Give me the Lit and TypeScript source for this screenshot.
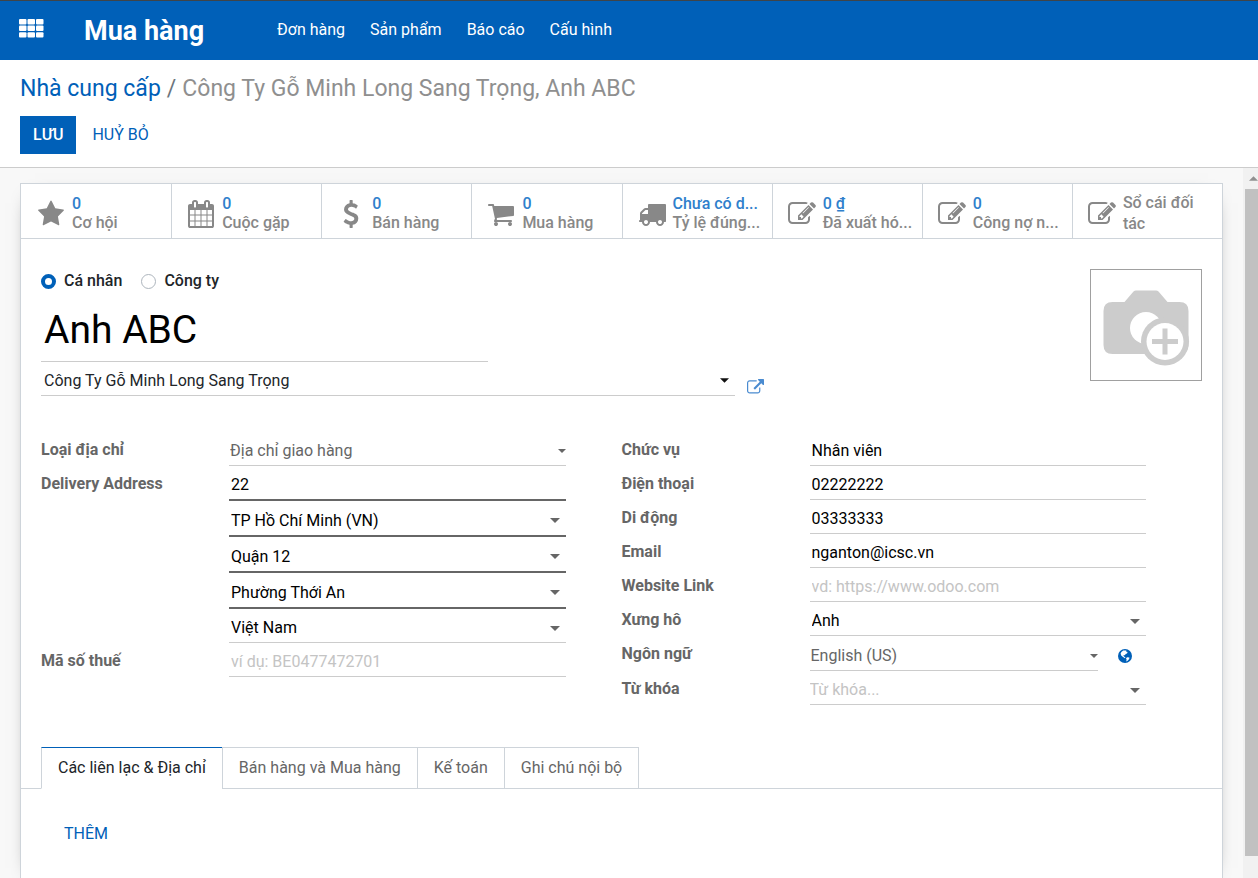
import { LitElement, html, css, svg, nothing } from "lit";
import { customElement, property, state } from "lit/decorators.js";
import { classMap } from "lit/directives/class-map.js";

const ICONS: Record<string, string> = {
  star: "M1728 647q0 22-26 48l-363 354 86 500q1 7 1 20 0 21-10.5 35.5t-30.5 14.5q-19 0-40-12l-449-236-449 236q-22 12-40 12-21 0-31.5-14.5t-10.5-35.5q0-6 2-20l86-500-364-354q-25-27-25-48 0-37 56-46l502-73 225-455q19-41 49-41t49 41l225 455 502 73q56 9 56 46z",
  calendar:
    "M192 1664h288v-288h-288v288zm352 0h320v-288h-320v288zm-352-352h288v-320h-288v320zm352 0h320v-320h-320v320zm-352-384h288v-288h-288v288zm736 736h320v-288h-320v288zm-384-736h320v-288h-320v288zm768 736h288v-288h-288v288zm-384-352h320v-320h-320v320zm-352-864v-288q0-13-9.5-22.5t-22.5-9.5h-64q-13 0-22.5 9.5t-9.5 22.5v288q0 13 9.5 22.5t22.5 9.5h64q13 0 22.5-9.5t9.5-22.5zm736 864h288v-320h-288v320zm-384-384h320v-288h-320v288zm384 0h288v-288h-288v288zm32-480v-288q0-13-9.5-22.5t-22.5-9.5h-64q-13 0-22.5 9.5t-9.5 22.5v288q0 13 9.5 22.5t22.5 9.5h64q13 0 22.5-9.5t9.5-22.5zm384-64v1280q0 52-38 90t-90 38h-1408q-52 0-90-38t-38-90v-1280q0-52 38-90t90-38h128v-96q0-66 47-113t113-47h64q66 0 113 47t47 113v96h384v-96q0-66 47-113t113-47h64q66 0 113 47t47 113v96h128q52 0 90 38t38 90z",
  dollar:
    "M1362 1185q0 153-99.5 263.5t-258.5 136.5v175q0 14-9 23t-23 9h-135q-13 0-22.5-9.5t-9.5-22.5v-175q-66-9-127.5-31t-101.5-44.5-74-48-46.5-37.5-17.5-18q-17-21-2-41l103-135q7-10 23-12 15-2 24 9l2 2q113 99 243 125 37 8 74 8 81 0 142.5-43t61.5-122q0-28-15-53t-33.5-42-58.5-37.5-66-32-80-32.5q-39-16-61.5-25t-61.5-26.5-62.5-31-56.5-35.5-53.5-42.5-43.5-49-35.5-58-21-66.5-8.5-78q0-138 98-242t255-134v-180q0-13 9.5-22.5t22.5-9.5h135q14 0 23 9t9 23v176q57 6 110.5 23t87 33.5 63.5 37.5 39 29 15 14q17 18 5 38l-81 146q-8 15-23 16-14 3-27-7-3-3-14.5-12t-39-26.5-58.5-32-74.5-26-85.5-11.5q-95 0-155 43t-60 111q0 26 8.5 48t29.5 41.5 39.5 33 56 31 60.5 27 70 27.5q53 20 81 31.5t76 35 75.5 42.5 62 50 53 63.5 31.5 76.5 13 94z",
  cart: "M704 1536q0 52-38 90t-90 38-90-38-38-90 38-90 90-38 90 38 38 90zm896 0q0 52-38 90t-90 38-90-38-38-90 38-90 90-38 90 38 38 90zm128-1088v512q0 24-16.5 42.5t-40.5 21.5l-1044 122q13 60 13 70 0 16-24 64h920q26 0 45 19t19 45-19 45-45 19h-1024q-26 0-45-19t-19-45q0-11 8-31.5t16-36 21.5-40 15.5-29.5l-177-823h-204q-26 0-45-19t-19-45 19-45 45-19h256q16 0 28.5 6.5t19.5 15.5 13 24.5 8 26 5.5 29.5 4.5 26h1201q26 0 45 19t19 45z",
  truck:
    "M640 1408q0-52-38-90t-90-38-90 38-38 90 38 90 90 38 90-38 38-90zm-384-512h384v-256h-158q-13 0-22 9l-195 195q-9 9-9 22v30zm1280 512q0-52-38-90t-90-38-90 38-38 90 38 90 90 38 90-38 38-90zm256-1088v1024q0 15-4 26.5t-13.5 18.5-16.5 11.5-23.5 6-22.5 2-25.5 0-22.5-.5q0 106-75 181t-181 75-181-75-75-181h-384q0 106-75 181t-181 75-181-75-75-181h-64q-3 0-22.5.5t-25.5 0-22.5-2-23.5-6-16.5-11.5-13.5-18.5-4-26.5q0-26 19-45t45-19v-320q0-8-.5-35t0-38 2.5-34.5 6.5-37 14-30.5 22.5-30l198-198q19-19 50.5-32t58.5-13h160v-192q0-26 19-45t45-19h1024q26 0 45 19t19 45z",
  edit: "M888 1184l116-116-152-152-116 116v56h96v96h56zm440-720q-16-16-33 1l-350 350q-17 17-1 33t33-1l350-350q17-17 1-33zm80 594v190q0 119-84.5 203.5t-203.5 84.5h-832q-119 0-203.5-84.5t-84.5-203.5v-832q0-119 84.5-203.5t203.5-84.5h832q63 0 117 25 15 7 18 23 3 17-9 29l-49 49q-14 14-32 8-23-6-45-6h-832q-66 0-113 47t-47 113v832q0 66 47 113t113 47h832q66 0 113-47t47-113v-126q0-13 9-22l64-64q15-15 35-7t20 29zm-96-738l288 288-672 672h-288v-288zm444 132l-92 92-288-288 92-92q28-28 68-28t68 28l152 152q28 28 28 68t-28 68z",
  external:
    "M1408 928v320q0 119-84.5 203.5t-203.5 84.5h-832q-119 0-203.5-84.5t-84.5-203.5v-832q0-119 84.5-203.5t203.5-84.5h704q14 0 23 9t9 23v64q0 14-9 23t-23 9h-704q-66 0-113 47t-47 113v832q0 66 47 113t113 47h832q66 0 113-47t47-113v-320q0-14 9-23t23-9h64q14 0 23 9t9 23zm384-864v512q0 26-19 45t-45 19-45-19l-176-176-652 652q-10 10-23 10t-23-10l-114-114q-10-10-10-23t10-23l652-652-176-176q-19-19-19-45t19-45 45-19h512q26 0 45 19t19 45z",
};

const icon = (name: string) => html`
  <svg class="icon" viewBox="0 0 1792 1792" fill="currentColor" aria-hidden="true">
    <path d=${ICONS[name]}></path>
  </svg>
`;

interface Stat {
  icon: string;
  value?: string;
  label: string;
}

interface Field {
  id: string;
  label?: string;
  kind: "text" | "combo" | "select" | "lang" | "tags";
  value?: string;
  placeholder?: string;
  required?: boolean;
}

const MENU = ["Đơn hàng", "Sản phẩm", "Báo cáo", "Cấu hình"];

const STATS: Stat[] = [
  { icon: "star", value: "0", label: "Cơ hội" },
  { icon: "calendar", value: "0", label: "Cuộc gặp" },
  { icon: "dollar", value: "0", label: "Bán hàng" },
  { icon: "cart", value: "0", label: "Mua hàng" },
  { icon: "truck", value: "Chưa có d...", label: "Tỷ lệ đúng..." },
  { icon: "edit", value: "0 ₫", label: "Đã xuất hó..." },
  { icon: "edit", value: "0", label: "Công nợ n..." },
  { icon: "edit", label: "Sổ cái đối tác" },
];

const LEFT: Field[] = [
  { id: "type", label: "Loại địa chỉ", kind: "select", value: "Địa chỉ giao hàng" },
  { id: "street", label: "Delivery Address", kind: "text", value: "22", required: true },
  { id: "state", kind: "combo", value: "TP Hồ Chí Minh (VN)", required: true },
  { id: "district", kind: "combo", value: "Quận 12", required: true },
  { id: "ward", kind: "combo", value: "Phường Thới An", required: true },
  { id: "country", kind: "combo", value: "Việt Nam" },
  { id: "vat", label: "Mã số thuế", kind: "text", placeholder: "ví dụ: BE0477472701" },
];

const RIGHT: Field[] = [
  { id: "function", label: "Chức vụ", kind: "text", value: "Nhân viên" },
  { id: "phone", label: "Điện thoại", kind: "text", value: "02222222" },
  { id: "mobile", label: "Di động", kind: "text", value: "03333333" },
  { id: "email", label: "Email", kind: "text", value: "nganton@icsc.vn" },
  { id: "website", label: "Website Link", kind: "text", placeholder: "vd: https://www.odoo.com" },
  { id: "title", label: "Xưng hô", kind: "combo", value: "Anh" },
  { id: "lang", label: "Ngôn ngữ", kind: "lang", value: "English (US)" },
  { id: "tags", label: "Từ khóa", kind: "tags", placeholder: "Từ khóa..." },
];

const TABS = ["Các liên lạc & Địa chỉ", "Bán hàng và Mua hàng", "Kế toán", "Ghi chú nội bộ"];

const iconStyles = css`
  .icon {
    display: block;
    flex: none;
    width: 28px;
    height: 28px;
  }
`;

@customElement("top-bar")
class TopBar extends LitElement {
  static styles = css`
    :host {
      display: block;
    }
    .bar {
      display: flex;
      align-items: center;
      box-sizing: border-box;
      height: 60px;
      padding: 0 19px;
      background: #0060b8;
      border-top: 1px solid #3f4448;
      color: #fff;
    }
    .apps {
      display: flex;
      padding: 0;
      border: 0;
      background: none;
      color: inherit;
      margin: 0 40px 4px 0;
    }
    .grid {
      width: 25px;
      height: 19px;
    }
    .brand {
      margin-right: 73px;
      color: inherit;
      font-size: 27px;
      font-weight: 700;
      text-decoration: none;
    }
    .menu {
      display: flex;
      gap: 25px;
      padding-bottom: 2px;
    }
    .link {
      color: inherit;
      text-decoration: none;
    }
  `;

  render() {
    const cells = [0, 1, 2].flatMap((r) => [0, 1, 2].map((c) => [c * 8.5, r * 6.6]));
    return html`
      <header class="bar">
        <button class="apps" aria-label="Apps">
          <svg class="grid" viewBox="0 0 25 19" fill="currentColor">
            ${cells.map(([x, y]) => svg`<rect x=${x} y=${y} width="7.5" height="5.4" rx="1"></rect>`)}
          </svg>
        </button>
        <a class="brand" href="#">Mua hàng</a>
        <nav class="menu">${MENU.map((m) => html`<a class="link" href="#">${m}</a>`)}</nav>
      </header>
    `;
  }
}

@customElement("stat-bar")
class StatBar extends LitElement {
  static styles = [
    iconStyles,
    css`
      :host {
        display: block;
      }
      .stats {
        display: grid;
        grid-template-columns: repeat(8, minmax(0, 1fr));
        height: 54px;
        border-bottom: 1px solid #ced4da;
      }
      .stat {
        display: flex;
        align-items: center;
        gap: 7px;
        min-width: 0;
        padding: 2px 6px 0 15px;
        border: 0;
        border-left: 1px solid #ced4da;
        background: none;
        color: #888;
        font: inherit;
        font-weight: 500;
        text-align: left;
      }
      .stat:first-child {
        border-left-color: transparent;
      }
      .icon {
        margin-top: 4px;
      }
      .text {
        display: flex;
        flex-direction: column;
        min-width: 0;
        line-height: 19px;
        padding-top: 2px;
      }
      .wrap {
        line-height: 21px;
      }
      .value {
        color: #2f80cc;
      }
      .value,
      .short {
        white-space: nowrap;
      }
    `,
  ];

  render() {
    return html`
      <div class="stats">
        ${STATS.map(
          (s) => html`
            <button class="stat">
              ${icon(s.icon)}
              <span class=${classMap({ text: true, wrap: !s.value })}>
                ${s.value ? html`<span class="value">${s.value}</span>` : nothing}
                <span class=${s.value ? "short" : ""}>${s.label}</span>
              </span>
            </button>
          `
        )}
      </div>
    `;
  }
}

@customElement("field-group")
class FieldGroup extends LitElement {
  @property({ attribute: false }) fields: Field[] = [];

  static styles = css`
    :host {
      display: block;
    }
    .row {
      display: grid;
      grid-template-columns: 188px minmax(0, 1fr);
      grid-template-rows: 100%;
      height: 34px;
    }
    .medium {
      height: 35px;
    }
    .tall {
      height: 36px;
    }
    .label {
      color: #666;
      font-weight: 700;
      line-height: 36px;
    }
    .field {
      grid-column: 2;
      display: grid;
      align-items: center;
      box-sizing: border-box;
      border-bottom: 1px solid #ccc;
      padding-top: 5px;
    }
    .required {
      border-bottom: 2px solid #666;
    }
    .control {
      grid-area: 1 / 1;
      box-sizing: border-box;
      width: 100%;
      height: 24px;
      padding: 0 2px;
      border: 0;
      outline: 0;
      background: transparent;
      color: #000;
      font: inherit;
      appearance: none;
    }
    .plain {
      padding: 0 1px;
      color: #666;
    }
    .tags {
      padding: 0;
    }
    .control::placeholder {
      color: #c4c4c4;
      opacity: 1;
    }
    .caret {
      grid-area: 1 / 1;
      justify-self: end;
      width: 10px;
      height: 5px;
      margin-right: 6px;
      pointer-events: none;
      fill: #666;
    }
    .small {
      width: 8px;
      height: 4px;
      margin-right: 0;
    }
    .with-action {
      grid-column: 2;
      display: grid;
      grid-template-columns: minmax(0, 1fr) 28px;
      gap: 20px;
    }
    .with-action .field {
      grid-column: 1;
    }
    .globe-button {
      display: flex;
      align-items: center;
      padding: 4px 0 0;
      border: 0;
      background: none;
    }
    .globe {
      width: 14px;
      height: 14px;
    }
  `;

  private control(f: Field) {
    const drop = f.kind !== "text";
    const plain = f.kind === "select" || f.kind === "lang";
    const box = html`
      <div class=${classMap({ field: true, required: !!f.required })}>
        ${f.kind === "text" || f.kind === "tags"
          ? html`<input
              class=${classMap({ control: true, tags: f.kind === "tags" })}
              id=${f.id}
              aria-label=${f.label ?? f.id}
              .value=${f.value ?? ""}
              placeholder=${f.placeholder ?? ""}
            />`
          : html`<select
              class=${classMap({ control: true, plain })}
              id=${f.id}
              aria-label=${f.label ?? f.id}
            >
              <option>${f.value}</option>
            </select>`}
        ${drop
          ? html`<svg class=${classMap({ caret: true, small: plain })} viewBox="0 0 10 5">
              <path d="M0 0h10l-5 5z"></path>
            </svg>`
          : nothing}
      </div>
    `;
    if (f.kind !== "lang") return box;
    return html`
      <div class="with-action">
        ${box}
        <button class="globe-button" aria-label="Language">
          <svg class="globe" viewBox="0 0 14 14">
            <circle cx="7" cy="7" r="7" fill="#0060b8"></circle>
            <path
              fill="#fff"
              d="M3.400 3 5.200 1.600 8.400 1.400 8 2.600 9.600 3 9 4.400 7.600 5 7 6.200 5.400 6 6 7.400 7.400 8.200 7 9.200 5 8 3.200 6.400 2.600 4.600z"
            ></path>
            <path fill="#fff" d="M9 8.200 11.400 8.600 11.200 10 9.600 11.800 8.200 12.400 8.600 10.600 8 9.400z"></path>
          </svg>
        </button>
      </div>
    `;
  }

  render() {
    return this.fields.map(
      (f) => html`
        <div
          class=${classMap({
            row: true,
            medium: f.kind === "lang" || (!!f.required && f.kind === "text"),
            tall: !!f.required && f.kind === "combo",
          })}
        >
          ${f.label ? html`<label class="label" for=${f.id}>${f.label}</label>` : nothing}
          ${this.control(f)}
        </div>
      `
    );
  }
}

@customElement("app-root")
class AppRoot extends LitElement {
  @state() private tab = 0;

  static styles = [
    iconStyles,
    css`
      :host {
        display: flex;
        flex-direction: column;
        height: 100vh;
        overflow: hidden;
        background: #fff;
        color: #212529;
        font-family: Roboto, "Noto Sans", sans-serif;
        font-size: 16px;
        line-height: 24px;
      }
      .panel {
        flex: none;
        padding: 15px 20px 13px;
        border-bottom: 1px solid #ccc;
      }
      .crumbs {
        display: flex;
        gap: 6px;
        margin-bottom: 13px;
        color: #8f8f8f;
        font-size: 23px;
        line-height: 28px;
      }
      .crumb {
        color: #0060b8;
        text-decoration: none;
      }
      .slash {
        color: #6c757d;
      }
      .actions {
        display: flex;
        gap: 3px;
      }
      .btn {
        height: 38px;
        padding: 0 13px;
        border: 0;
        background: none;
        color: #0060b8;
        font: inherit;
      }
      .primary {
        background: #0060b8;
        color: #fff;
        font-weight: 500;
      }
      .body {
        flex: 1;
        display: flex;
        min-height: 0;
        background: #f8f8f8;
      }
      .content {
        flex: 1;
        display: flex;
        min-width: 0;
        padding: 15px 20px 0;
      }
      .sheet {
        flex: 1;
        min-width: 0;
        border: 1px solid #ced4da;
        border-bottom: 0;
        background: #fff;
        box-shadow: 0 5px 20px -15px #000;
      }
      .head {
        display: flex;
        justify-content: space-between;
        align-items: flex-start;
        padding: 30px 20px 36px;
      }
      .identity {
        flex: 0 1 723px;
        min-width: 0;
      }
      .radios {
        display: flex;
        gap: 19px;
      }
      .radio {
        display: flex;
        align-items: center;
        gap: 8px;
        font-weight: 500;
      }
      .dot {
        appearance: none;
        box-sizing: border-box;
        width: 15px;
        height: 15px;
        margin: 0;
        border: 1px solid #adb5bd;
        border-radius: 50%;
        background: #fff;
      }
      .dot:checked {
        border: 4px solid #0060b8;
      }
      .name {
        display: block;
        box-sizing: border-box;
        width: 447px;
        max-width: 100%;
        height: 69px;
        padding: 5px 3px 0;
        border: 0;
        border-bottom: 1px solid #ccc;
        outline: 0;
        background: none;
        color: #000;
        font: inherit;
        font-size: 39px;
      }
      .company {
        display: grid;
        grid-template-columns: minmax(0, 1fr) 17px;
        gap: 12px;
        align-items: end;
      }
      .combo {
        display: grid;
        align-items: center;
        box-sizing: border-box;
        height: 34px;
        padding-top: 4px;
        border-bottom: 1px solid #ccc;
      }
      .combo-input {
        grid-area: 1 / 1;
        height: 24px;
        padding: 0 3px;
        border: 0;
        outline: 0;
        appearance: none;
        background: none;
        color: #212529;
        font: inherit;
      }
      .caret {
        grid-area: 1 / 1;
        justify-self: end;
        width: 9px;
        height: 5px;
        margin-right: 6px;
        pointer-events: none;
      }
      .open {
        display: flex;
        padding: 0;
        border: 0;
        background: none;
        color: #4a8bd0;
      }
      .open .icon {
        width: 17px;
        height: 17px;
      }
      .avatar {
        flex: none;
        padding: 0;
        border: 1px solid #a0a0a0;
        background: #fff;
      }
      .camera {
        display: block;
        width: 110px;
        height: 110px;
      }
      .groups {
        display: grid;
        grid-template-columns: repeat(2, minmax(0, 1fr));
        padding: 0 20px;
      }
      .group {
        padding-right: 56px;
      }
      .tabs {
        display: flex;
        margin-top: 42px;
        padding: 0 20px;
        border-bottom: 1px solid #ced4da;
      }
      .tab {
        height: 42px;
        margin: 0 0 -1px -1px;
        padding: 0 16px;
        border: 1px solid #ced4da;
        background: #fff;
        color: #666;
        font: inherit;
      }
      .tab:first-child {
        margin-left: 0;
      }
      .active {
        border-top-color: #0060b8;
        border-bottom-color: #fff;
        color: #212529;
      }
      .pane {
        padding: 26px 30px;
      }
      .scroll {
        flex: none;
        display: grid;
        grid-template-rows: 21px 667fr 22fr;
        width: 15px;
        box-sizing: border-box;
        padding-left: 2px;
        background: #f1f1f1;
      }
      .arrow {
        align-self: center;
        justify-self: end;
        width: 9px;
        height: 5px;
      }
      .thumb {
        background: #c1c1c1;
      }
    `,
  ];

  render() {
    return html`
      <top-bar></top-bar>
      <section class="panel">
        <nav class="crumbs">
          <a class="crumb" href="#">Nhà cung cấp</a>
          <span class="slash">/</span>
          <span>Công Ty Gỗ Minh Long Sang Trọng, Anh ABC</span>
        </nav>
        <div class="actions">
          <button class="btn primary">LƯU</button>
          <button class="btn">HUỶ BỎ</button>
        </div>
      </section>
      <main class="body">
        <div class="content">
          <form class="sheet" @submit=${(e: Event) => e.preventDefault()}>
            <stat-bar></stat-bar>
            <div class="head">
              <div class="identity">
                <div class="radios">
                  <label class="radio"><input class="dot" type="radio" name="kind" checked />Cá nhân</label>
                  <label class="radio"><input class="dot" type="radio" name="kind" />Công ty</label>
                </div>
                <input class="name" aria-label="Name" .value=${"Anh ABC"} />
                <div class="company">
                  <div class="combo">
                    <select class="combo-input" aria-label="Company">
                      <option>Công Ty Gỗ Minh Long Sang Trọng</option>
                    </select>
                    <svg class="caret" viewBox="0 0 10 5"><path d="M0 0h10l-5 5z" fill="#111"></path></svg>
                  </div>
                  <button class="open" type="button" aria-label="Open">${icon("external")}</button>
                </div>
              </div>
              <button class="avatar" type="button" aria-label="Photo">
                <svg class="camera" viewBox="0 0 110 110">
                  <path
                    fill="#ccc"
                    d="M43 20.500h22q1.500 0 2.500 1l9 10.500h12q9 0 9 9v34q0 9-9 9h-67q-9 0-9-9v-34q0-9 9-9h12l9-10.500q1-1 2.500-1z"
                  ></path>
                  <circle cx="55" cy="58" r="16" fill="#fff"></circle>
                  <circle cx="74" cy="71.500" r="24" fill="#ccc"></circle>
                  <circle cx="74" cy="71.500" r="18.500" fill="#fff"></circle>
                  <path fill="#ccc" d="M71.500 58.500h5v10.500h10.500v5h-10.500v10.500h-5v-10.500h-10.500v-5h10.500z"></path>
                </svg>
              </button>
            </div>
            <div class="groups">
              <field-group class="group" .fields=${LEFT}></field-group>
              <field-group class="group" .fields=${RIGHT}></field-group>
            </div>
            <div class="tabs" role="tablist">
              ${TABS.map(
                (t, i) => html`
                  <button
                    type="button"
                    role="tab"
                    aria-selected=${i === this.tab}
                    class=${classMap({ tab: true, active: i === this.tab })}
                    @click=${() => (this.tab = i)}
                  >
                    ${t}
                  </button>
                `
              )}
            </div>
            <div class="pane"><button class="btn" type="button">THÊM</button></div>
          </form>
        </div>
        <div class="scroll" aria-hidden="true">
          <svg class="arrow" viewBox="0 0 10 5"><path d="M0 5h10l-5-5z" fill="#909090"></path></svg>
          <div class="thumb"></div>
        </div>
      </main>
    `;
  }
}
